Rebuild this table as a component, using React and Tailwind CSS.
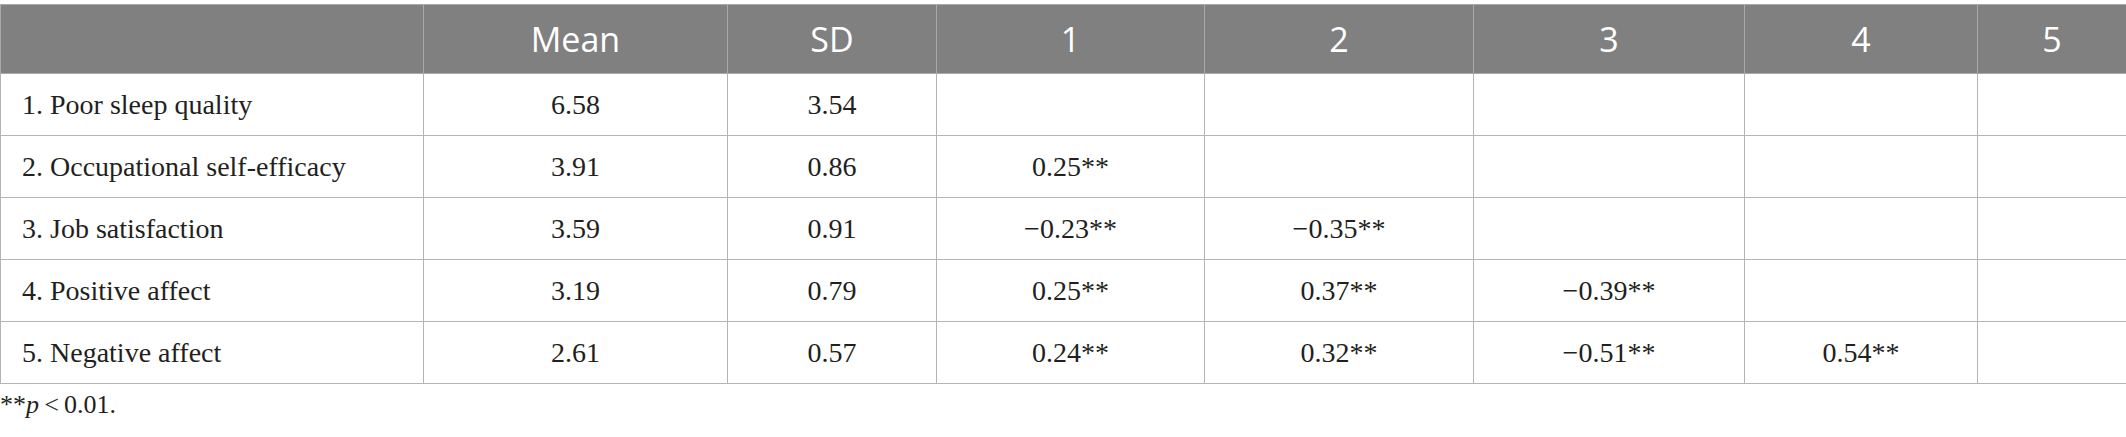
const header = ["", "Mean", "SD", "1", "2", "3", "4", "5"];

const rows = [
  ["1. Poor sleep quality", "6.58", "3.54", "", "", "", "", ""],
  ["2. Occupational self-efficacy", "3.91", "0.86", "0.25**", "", "", "", ""],
  ["3. Job satisfaction", "3.59", "0.91", "\u22120.23**", "\u22120.35**", "", "", ""],
  ["4. Positive affect", "3.19", "0.79", "0.25**", "0.37**", "\u22120.39**", "", ""],
  ["5. Negative affect", "2.61", "0.57", "0.24**", "0.32**", "\u22120.51**", "0.54**", ""],
];

const widths = ["w-[423px]", "w-[304px]", "w-[209px]", "w-[268px]", "w-[269px]", "w-[271px]", "w-[233px]", "w-[149px]"];

const App = () => {
  return (
    <main className="w-[2126px] h-[437px] bg-white pt-[4px] overflow-hidden">
      <table className="w-[2126px] table-fixed border-collapse border border-[#b4b4b4]">
        <colgroup>
          {widths.map((w, i) => (
            <col key={i} className={w} />
          ))}
        </colgroup>
        <thead>
          <tr className="h-[69px] bg-[#7f807f]">
            {header.map((h, i) => (
              <th
                key={i}
                className="border border-[#a9a9a9] p-0 text-center align-middle font-normal text-white text-[34px] leading-none font-['Open_Sans',sans-serif]"
              >
                {h}
              </th>
            ))}
          </tr>
        </thead>
        <tbody>
          {rows.map((r, ri) => (
            <tr key={ri} className="h-[62px]">
              {r.map((c, ci) => (
                <td
                  key={ci}
                  className={
                    ci === 0
                      ? "border border-[#b4b4b4] pl-[21px] text-left align-middle text-[28px] text-[#231f20] font-['Liberation_Serif',serif]"
                      : "border border-[#b4b4b4] p-0 text-center align-middle text-[28px] text-[#231f20] font-['Liberation_Serif',serif]"
                  }
                >
                  {c}
                </td>
              ))}
            </tr>
          ))}
        </tbody>
      </table>

      {/* footnote */}
      <p className="mt-[6px] text-[26px] leading-[30px] text-[#231f20] font-['Liberation_Serif',serif]">
        **<span className="italic">p</span>{"\u2009<\u20090.01."}
      </p>
    </main>
  );
};

export default App;
